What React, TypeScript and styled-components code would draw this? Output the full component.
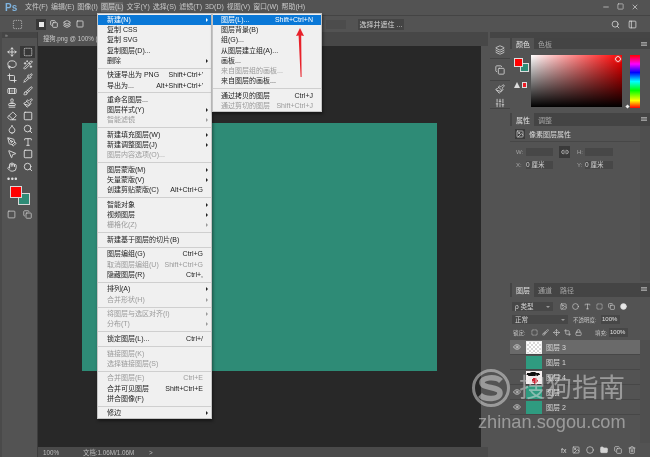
import { createGlobalStyle, styled } from "styled-components";
import {
  Bandage,
  Brush,
  Crop,
  Droplet,
  Eraser,
  FolderClosed,
  Hand,
  Image as ImageIcon,
  Layers,
  Lasso,
  Link2,
  Lock,
  Minus,
  MousePointer2,
  Move,
  PenTool,
  Pipette,
  Search,
  Square,
  SquareDashed,
  Stamp,
  Trash2,
  Type,
  Wand2,
  X,
  Eye,
  Circle,
  PanelLeft,
  Copy,
  Sliders,
  Paintbrush,
} from "lucide-react";

const GlobalStyle = createGlobalStyle`
  html, body { margin: 0; padding: 0; background: #535353; }
  * { box-sizing: border-box; }
`;

const Screen = styled.div`
  position: relative;
  width: 650px;
  height: 457px;
  overflow: hidden;
  display: flex;
  flex-direction: column;
  background: #535353;
  color: #d0d0d0;
  font-family: "Liberation Sans", "Noto Sans CJK SC", sans-serif;
  font-size: 7px;
  filter: blur(0.4px);
`;

const MenuBar = styled.div`
  height: 16px;
  display: flex;
  align-items: center;
  gap: 3px;
  padding-bottom: 1px;
  border-bottom: 1px solid #444;
`;

const Logo = styled.span`
  width: 22px;
  padding-left: 5px;
  color: #7fb3de;
  font-size: 10px;
  font-weight: bold;
`;

const MenuTitle = styled.span<{ $active?: boolean }>`
  height: 10px;
  line-height: 10px;
  white-space: nowrap;
  color: #c8c8c8;
  background: ${(p) => (p.$active ? "#666" : "transparent")};
`;

const WindowButtons = styled.div`
  margin-left: auto;
  padding-right: 11px;
  display: flex;
  gap: 7px;
  color: #ddd;
`;

const OptionsBar = styled.div`
  height: 16px;
  display: flex;
  align-items: center;
  padding-left: 12px;
  color: #ddd;
`;

const ModeGroup = styled.div`
  margin-left: 13px;
  display: flex;
  gap: 3px;
`;

const ModeButton = styled.span<{ $active?: boolean }>`
  width: 10px;
  height: 11px;
  display: flex;
  align-items: center;
  justify-content: center;
  background: ${(p) => (p.$active ? "#383838" : "transparent")};
`;

const ModeDot = styled.span`
  width: 5px;
  height: 5px;
  background: #e8e8e8;
`;

const DimField = styled.span`
  margin-left: 241px;
  width: 20px;
  height: 9px;
  background: #4c4c4c;
`;

const SelectMaskButton = styled.span`
  margin-left: 12px;
  width: 46px;
  height: 11px;
  line-height: 11px;
  text-align: center;
  background: #444;
  color: #d8d8d8;
  white-space: nowrap;
`;

const OptionsRight = styled.div`
  margin-left: auto;
  padding-right: 13px;
  display: flex;
  gap: 8px;
  color: #ddd;
`;

const Workspace = styled.div`
  flex: 1;
  min-height: 0;
  display: flex;
`;

const ToolPanel = styled.div`
  width: 38px;
  border-left: 2px solid #4a4a4a;
  border-right: 1px solid #3d3d3d;
  display: flex;
  flex-direction: column;
  align-items: center;
`;

const CollapseStrip = styled.div`
  align-self: stretch;
  height: 6px;
  background: #454545;
  color: #aaa;
  font-size: 5px;
  line-height: 6px;
  padding-left: 3px;
`;

const ToolGrid = styled.div`
  margin-top: 8px;
  display: grid;
  grid-template-columns: 16px 16px;
  grid-auto-rows: 12.75px;
  justify-items: center;
  align-items: center;
  color: #e4e4e4;
`;

const ToolCell = styled.span<{ $active?: boolean }>`
  width: 15px;
  height: 12px;
  display: flex;
  align-items: center;
  justify-content: center;
  background: ${(p) => (p.$active ? "#383838" : "transparent")};
`;

const MoreDots = styled.div`
  align-self: flex-start;
  margin: 1px 0 0 5px;
  height: 10px;
  line-height: 8px;
  font-size: 9px;
  letter-spacing: 0.5px;
  color: #ddd;
`;

const Swatches = styled.div`
  position: relative;
  align-self: flex-start;
  width: 22px;
  height: 22px;
  margin: 1px 0 0 8px;
`;

const Swatch = styled.span<{ $color: string; $back?: boolean }>`
  position: absolute;
  left: ${(p) => (p.$back ? "8px" : "0")};
  top: ${(p) => (p.$back ? "7px" : "0")};
  width: 12px;
  height: 12px;
  background: ${(p) => p.$color};
  border: 1px solid #d8d8d8;
  z-index: ${(p) => (p.$back ? 0 : 1)};
`;

const QuickRow = styled.div`
  margin-top: 2px;
  display: flex;
  gap: 7px;
  color: #cfcfcf;
`;

const DocColumn = styled.div`
  width: 450px;
  display: flex;
  flex-direction: column;
`;

const TabStrip = styled.div`
  height: 14px;
  display: flex;
  background: #474747;
`;

const DocTab = styled.span`
  width: 70px;
  padding-left: 5px;
  line-height: 14px;
  background: #535353;
  color: #c8c8c8;
  font-size: 6.3px;
  white-space: nowrap;
`;

const DocBody = styled.div`
  flex: 1;
  min-height: 0;
  display: flex;
`;

const Pasteboard = styled.div`
  flex: 1;
  display: flex;
  align-items: center;
  justify-content: center;
  background: #282828;
`;

const Artboard = styled.div`
  width: 355px;
  height: 248px;
  background: #2e8b76;
`;

const ScrollStrip = styled.div`
  width: 7px;
  background: #535353;
`;

const StatusBar = styled.div`
  height: 10px;
  display: flex;
  align-items: center;
  padding-left: 5px;
  background: #4a4a4a;
  color: #bdbdbd;
  font-size: 6.3px;
`;

const StatusDoc = styled.span`
  margin-left: 24px;
  width: 66px;
`;

const Dock = styled.div`
  width: 22px;
  padding-left: 2px;
  display: flex;
  flex-direction: column;
  color: #d5d5d5;
`;

const DockHeader = styled.div`
  height: 6px;
  background: #454545;
  margin-bottom: 3px;
`;

const DockIcon = styled.div<{ $height: number; $divided?: boolean }>`
  height: ${(p) => p.$height}px;
  display: flex;
  align-items: center;
  justify-content: center;
  border-bottom: ${(p) => (p.$divided ? "1px solid #444" : "none")};
`;

const Panels = styled.div`
  width: 140px;
  display: flex;
  flex-direction: column;
`;

const PanelTop = styled.div`
  height: 6px;
  background: #454545;
`;

const TabRow = styled.div<{ $height: number }>`
  height: ${(p) => p.$height}px;
  display: flex;
  align-items: stretch;
  background: #444;
  padding-left: 2px;
  position: relative;
`;

const PanelTab = styled.span<{ $active?: boolean }>`
  padding: 0 4px;
  display: flex;
  align-items: center;
  background: ${(p) => (p.$active ? "#535353" : "transparent")};
  color: ${(p) => (p.$active ? "#e0e0e0" : "#a5a5a5")};
`;

const PanelMenu = styled.span`
  position: absolute;
  right: 3px;
  top: 4px;
  width: 6px;
  height: 4px;
  border-top: 1px solid #999;
  border-bottom: 1px solid #999;
  background: #777;
`;

const ColorBody = styled.div`
  height: 62px;
  margin-bottom: 2px;
  padding: 6px 10px 0 4px;
  display: flex;
`;

const ColorSwatches = styled.div`
  width: 17px;
  display: flex;
  flex-direction: column;
`;

const ColorPair = styled.div`
  position: relative;
  width: 15px;
  height: 15px;
  margin-top: 3px;
`;

const ColorSwatch = styled.span<{ $color: string; $back?: boolean }>`
  position: absolute;
  left: ${(p) => (p.$back ? "6px" : "0")};
  top: ${(p) => (p.$back ? "5px" : "0")};
  width: 9px;
  height: 9px;
  background: ${(p) => p.$color};
  border: 1px solid #ddd;
  z-index: ${(p) => (p.$back ? 0 : 1)};
`;

const GamutRow = styled.div`
  margin-top: 9px;
  display: flex;
  align-items: center;
  gap: 2px;
`;

const GamutMark = styled.span`
  width: 0;
  height: 0;
  border-left: 3px solid transparent;
  border-right: 3px solid transparent;
  border-bottom: 6px solid #ddd;
`;

const GamutColor = styled.span`
  width: 5px;
  height: 6px;
  background: #ee1c25;
  border: 1px solid #ddd;
`;

const ColorField = styled.div`
  position: relative;
  width: 91px;
  height: 52px;
  background: linear-gradient(to top, #000, transparent),
    linear-gradient(to right, #fff, #f00);
`;

const ColorRing = styled.span`
  position: absolute;
  right: 1px;
  top: 1px;
  width: 6px;
  height: 6px;
  border: 1px solid #fff;
  outline: 0.5px solid #d33;
  border-radius: 50%;
`;

const HueStrip = styled.div`
  position: relative;
  margin-left: 8px;
  width: 10px;
  height: 53px;
  background: linear-gradient(to bottom, #f00, #f0f 17%, #00f 33%, #0ff 50%, #0f0 67%, #ff0 86%, #f00);
`;

const HueMark = styled.span`
  position: absolute;
  left: -4px;
  bottom: 0;
  width: 3px;
  height: 3px;
  background: #eee;
  transform: rotate(45deg);
`;

const PropsBody = styled.div`
  height: 155px;
  margin-bottom: 2px;
  border-right: 10px solid #4f4f4f;
`;

const PropsTitle = styled.div`
  height: 16px;
  padding-left: 5px;
  display: flex;
  align-items: center;
  gap: 4px;
  border-bottom: 1px solid #474747;
  color: #d8d8d8;
`;

const PropsThumb = styled.span`
  width: 10px;
  height: 10px;
  display: flex;
  align-items: center;
  justify-content: center;
  background: #3c3c3c;
  color: #ddd;
`;

const FieldGrid = styled.div`
  padding: 3px 0 0 6px;
  display: grid;
  grid-template-columns: 10px 27px 6px 11px 7px 8px 28px;
  grid-auto-rows: 13px;
  align-items: center;
  color: #a5a5a5;
  font-size: 6px;
`;

const FieldInput = styled.span`
  height: 8px;
  line-height: 8px;
  background: #474747;
  color: #d0d0d0;
  font-size: 6.5px;
  white-space: nowrap;
`;

const LinkButton = styled.span`
  width: 11px;
  height: 12px;
  display: flex;
  align-items: center;
  justify-content: center;
  background: #3a3a3a;
  color: #ddd;
`;

const LayerControls = styled.div`
  height: 13px;
  padding-left: 2px;
  display: flex;
  align-items: center;
  color: #c4c4c4;
  font-size: 6.5px;
  white-space: nowrap;
`;

const ControlsTop = styled.div`
  height: 3px;
`;

const SelectBox = styled.span<{ $width: number }>`
  width: ${(p) => p.$width}px;
  height: 9px;
  line-height: 9px;
  padding-left: 3px;
  background: #474747;
  color: #d4d4d4;
  position: relative;
  &::after {
    content: "";
    position: absolute;
    right: 3px;
    top: 4px;
    border-left: 2px solid transparent;
    border-right: 2px solid transparent;
    border-top: 2px solid #999;
  }
`;

const FilterIcons = styled.div`
  margin-left: 7px;
  display: flex;
  gap: 5px;
  color: #d8d8d8;
`;

const ControlLabel = styled.span<{ $left: number; $width: number }>`
  margin-left: ${(p) => p.$left}px;
  width: ${(p) => p.$width}px;
  font-size: 5.5px;
`;

const PercentBox = styled.span`
  width: 19px;
  height: 9px;
  line-height: 9px;
  padding-left: 1px;
  background: #474747;
  color: #e0e0e0;
  font-size: 6px;
`;

const LockIcons = styled.div`
  width: 64px;
  margin-left: 5px;
  display: flex;
  gap: 4px;
  color: #d8d8d8;
`;

const LayerList = styled.div`
  flex: 1;
  min-height: 0;
  margin-top: 1px;
  border-right: 10px solid #4f4f4f;
`;

const LayerRow = styled.div<{ $selected?: boolean }>`
  height: 15px;
  display: flex;
  align-items: center;
  background: ${(p) => (p.$selected ? "#6a6a6a" : "transparent")};
  border-bottom: 1px solid #474747;
  color: #d8d8d8;
`;

const EyeSlot = styled.span`
  width: 16px;
  padding-left: 3px;
  display: flex;
  color: #e0e0e0;
`;

const LayerThumb = styled.span<{ $kind: "check" | "teal" | "photo" }>`
  width: 16px;
  height: 13px;
  margin-right: 4px;
  background: ${(p) =>
    p.$kind === "teal"
      ? "#2f9b80"
      : p.$kind === "photo"
        ? "radial-gradient(ellipse 7px 2px at 45% 25%, #111 90%, transparent), radial-gradient(circle 3px at 55% 75%, #c23 90%, transparent), #f6f0f0"
        : "repeating-conic-gradient(#d8d8d8 0 25%, #fff 0 50%) 0 0 / 4px 4px"};
  border: ${(p) => (p.$kind === "check" ? "1px solid #eee" : "none")};
`;

const LayerFooter = styled.div`
  height: 14px;
  padding: 0 14px 0 51px;
  display: flex;
  align-items: center;
  justify-content: space-between;
  color: #d4d4d4;
`;

const LayerMenu = styled.div`
  position: absolute;
  left: 97px;
  top: 13px;
  width: 115px;
  padding-top: 1px;
  background: #f0f0f0;
  border: 1px solid #c4c4c4;
  box-shadow: 1px 2px 3px rgba(0, 0, 0, 0.45);
  color: #222;
  z-index: 2;
`;

const SubMenu = styled(LayerMenu)`
  left: 212px;
  top: 13px;
  width: 110px;
  z-index: 3;
`;

const MenuRow = styled.div<{ $hot?: boolean; $off?: boolean; $indent: number }>`
  height: 10.2px;
  line-height: 10.2px;
  display: flex;
  padding-left: ${(p) => p.$indent}px;
  white-space: nowrap;
  background: ${(p) => (p.$hot ? "#0a78d7" : "transparent")};
  color: ${(p) => (p.$hot ? "#fff" : p.$off ? "#9a9a9a" : "#222")};
`;

const MenuLabel = styled.span`
  flex: 1;
`;

const MenuArrow = styled.span<{ $shown: boolean }>`
  width: 8px;
  flex: none;
  position: relative;
  &::after {
    content: "";
    display: ${(p) => (p.$shown ? "block" : "none")};
    position: absolute;
    left: 3px;
    top: 3px;
    border-top: 2px solid transparent;
    border-bottom: 2px solid transparent;
    border-left: 2.5px solid currentColor;
  }
`;

const MenuSeparator = styled.div`
  height: 4.4px;
  display: flex;
  align-items: center;
  &::after {
    content: "";
    width: 100%;
    height: 1px;
    background: #cfcfcf;
  }
`;

const RedArrow = styled.svg`
  position: absolute;
  left: 295px;
  top: 27px;
  z-index: 4;
`;

const Watermark = styled.div`
  position: absolute;
  left: 470px;
  top: 369px;
  width: 170px;
  color: rgba(225, 225, 225, 0.5);
  z-index: 1;
`;

const WatermarkTop = styled.div`
  display: flex;
  align-items: center;
  gap: 7px;
`;

const WatermarkName = styled.span`
  font-size: 26.5px;
  line-height: 38px;
  white-space: nowrap;
`;

const WatermarkUrl = styled.div`
  margin: 5px 0 0 8px;
  font-size: 18.2px;
  line-height: 20px;
  white-space: nowrap;
`;

type Entry = { label?: string; keys?: string; arrow?: boolean; off?: boolean; hot?: boolean };

const mainMenu: Entry[] = [
  { label: "新建(N)", arrow: true, hot: true },
  { label: "复制 CSS" },
  { label: "复制 SVG" },
  { label: "复制图层(D)..." },
  { label: "删除", arrow: true },
  {},
  { label: "快速导出为 PNG", keys: "Shift+Ctrl+'" },
  { label: "导出为...", keys: "Alt+Shift+Ctrl+'" },
  {},
  { label: "重命名图层..." },
  { label: "图层样式(Y)", arrow: true },
  { label: "智能滤镜", arrow: true, off: true },
  {},
  { label: "新建填充图层(W)", arrow: true },
  { label: "新建调整图层(J)", arrow: true },
  { label: "图层内容选项(O)...", off: true },
  {},
  { label: "图层蒙版(M)", arrow: true },
  { label: "矢量蒙版(V)", arrow: true },
  { label: "创建剪贴蒙版(C)", keys: "Alt+Ctrl+G" },
  {},
  { label: "智能对象", arrow: true },
  { label: "视频图层", arrow: true },
  { label: "栅格化(Z)", arrow: true, off: true },
  {},
  { label: "新建基于图层的切片(B)" },
  {},
  { label: "图层编组(G)", keys: "Ctrl+G" },
  { label: "取消图层编组(U)", keys: "Shift+Ctrl+G", off: true },
  { label: "隐藏图层(R)", keys: "Ctrl+," },
  {},
  { label: "排列(A)", arrow: true },
  { label: "合并形状(H)", arrow: true, off: true },
  {},
  { label: "将图层与选区对齐(I)", arrow: true, off: true },
  { label: "分布(T)", arrow: true, off: true },
  {},
  { label: "锁定图层(L)...", keys: "Ctrl+/" },
  {},
  { label: "链接图层(K)", off: true },
  { label: "选择链接图层(S)", off: true },
  {},
  { label: "合并图层(E)", keys: "Ctrl+E", off: true },
  { label: "合并可见图层", keys: "Shift+Ctrl+E" },
  { label: "拼合图像(F)" },
  {},
  { label: "修边", arrow: true },
];

const newMenu: Entry[] = [
  { label: "图层(L)...", keys: "Shift+Ctrl+N", hot: true },
  { label: "图层背景(B)" },
  { label: "组(G)..." },
  { label: "从图层建立组(A)..." },
  { label: "画板..." },
  { label: "来自图层组的画板...", off: true },
  { label: "来自图层的画板..." },
  {},
  { label: "通过拷贝的图层", keys: "Ctrl+J" },
  { label: "通过剪切的图层", keys: "Shift+Ctrl+J", off: true },
];

const menuTitles = ["文件(F)", "编辑(E)", "图像(I)", "图层(L)", "文字(Y)", "选择(S)", "滤镜(T)", "3D(D)", "视图(V)", "窗口(W)", "帮助(H)"];

const tools = [Move, SquareDashed, Lasso, Wand2, Crop, Pipette, Bandage, Brush, Stamp, Paintbrush, Eraser, Square, Droplet, Search, PenTool, Type, MousePointer2, Square, Hand, Search];

function MenuItems({ items, indent }: { items: Entry[]; indent: number }) {
  return (
    <>
      {items.map((item, i) =>
        item.label ? (
          <MenuRow key={i} $hot={item.hot} $off={item.off} $indent={indent}>
            <MenuLabel>{item.label}</MenuLabel>
            {item.keys && <span>{item.keys}</span>}
            <MenuArrow $shown={!!item.arrow} />
          </MenuRow>
        ) : (
          <MenuSeparator key={i} />
        ),
      )}
    </>
  );
}

function SogouMark() {
  return (
    <svg width="42" height="38" viewBox="0 0 42 38" fill="none" stroke="currentColor">
      <circle cx="21" cy="19" r="17.5" strokeWidth="3" />
      <path d="M31 12 C26 7 11 8 12 14 C13 20 30 17 30 24 C30 31 15 31 10 26" strokeWidth="5.5" />
    </svg>
  );
}

export default function App() {
  return (
    <>
      <GlobalStyle />
      <Screen>
        <MenuBar>
          <Logo>Ps</Logo>
          {menuTitles.map((title) => (
            <MenuTitle key={title} $active={title === "图层(L)"}>
              {title}
            </MenuTitle>
          ))}
          <WindowButtons>
            <Minus size={8} />
            <Square size={7} />
            <X size={8} />
          </WindowButtons>
        </MenuBar>

        <OptionsBar>
          <SquareDashed size={11} strokeWidth={1.4} />
          <ModeGroup>
            <ModeButton $active>
              <ModeDot />
            </ModeButton>
            <ModeButton>
              <Copy size={8} strokeWidth={2.4} />
            </ModeButton>
            <ModeButton>
              <Layers size={8} strokeWidth={2.4} />
            </ModeButton>
            <ModeButton>
              <Square size={8} strokeWidth={2.4} />
            </ModeButton>
          </ModeGroup>
          <DimField />
          <SelectMaskButton>选择并遮住 ...</SelectMaskButton>
          <OptionsRight>
            <Search size={9} />
            <PanelLeft size={9} />
          </OptionsRight>
        </OptionsBar>

        <Workspace>
          <ToolPanel>
            <CollapseStrip>»</CollapseStrip>
            <ToolGrid>
              {tools.map((Tool, i) => (
                <ToolCell key={i} $active={i === 1}>
                  <Tool size={10} strokeWidth={2.1} />
                </ToolCell>
              ))}
            </ToolGrid>
            <MoreDots>•••</MoreDots>
            <Swatches>
              <Swatch $color="#ff0000" />
              <Swatch $color="#2e8b76" $back />
            </Swatches>
            <QuickRow>
              <Square size={9} />
              <Copy size={9} />
            </QuickRow>
          </ToolPanel>

          <DocColumn>
            <TabStrip>
              <DocTab>搜狗.png @ 100% (</DocTab>
            </TabStrip>
            <DocBody>
              <Pasteboard>
                <Artboard />
              </Pasteboard>
              <ScrollStrip />
            </DocBody>
            <StatusBar>
              <span>100%</span>
              <StatusDoc>文档:1.06M/1.06M</StatusDoc>
              <span>&gt;</span>
            </StatusBar>
          </DocColumn>

          <Dock>
            <DockHeader />
            <DockIcon $height={18} $divided>
              <Layers size={10} />
            </DockIcon>
            <DockIcon $height={22} $divided>
              <Copy size={10} />
            </DockIcon>
            <DockIcon $height={16}>
              <Paintbrush size={10} />
            </DockIcon>
            <DockIcon $height={12} $divided>
              <Sliders size={10} />
            </DockIcon>
          </Dock>

          <Panels>
            <PanelTop />
            <TabRow $height={11}>
              <PanelTab $active>颜色</PanelTab>
              <PanelTab>色板</PanelTab>
              <PanelMenu />
            </TabRow>
            <ColorBody>
              <ColorSwatches>
                <ColorPair>
                  <ColorSwatch $color="#ff0000" />
                  <ColorSwatch $color="#2e8b76" $back />
                </ColorPair>
                <GamutRow>
                  <GamutMark />
                  <GamutColor />
                </GamutRow>
              </ColorSwatches>
              <ColorField>
                <ColorRing />
              </ColorField>
              <HueStrip>
                <HueMark />
              </HueStrip>
            </ColorBody>

            <TabRow $height={13}>
              <PanelTab $active>属性</PanelTab>
              <PanelTab>调整</PanelTab>
              <PanelMenu />
            </TabRow>
            <PropsBody>
              <PropsTitle>
                <PropsThumb>
                  <ImageIcon size={8} />
                </PropsThumb>
                像素图层属性
              </PropsTitle>
              <FieldGrid>
                <span>W:</span>
                <FieldInput />
                <span />
                <LinkButton>
                  <Link2 size={8} />
                </LinkButton>
                <span />
                <span>H:</span>
                <FieldInput />
                <span>X:</span>
                <FieldInput>0 厘米</FieldInput>
                <span />
                <span />
                <span />
                <span>Y:</span>
                <FieldInput>0 厘米</FieldInput>
              </FieldGrid>
            </PropsBody>

            <TabRow $height={14}>
              <PanelTab $active>图层</PanelTab>
              <PanelTab>通道</PanelTab>
              <PanelTab>路径</PanelTab>
              <PanelMenu />
            </TabRow>
            <ControlsTop />
            <LayerControls>
              <SelectBox $width={41}>ρ 类型</SelectBox>
              <FilterIcons>
                <ImageIcon size={7} />
                <Circle size={7} />
                <Type size={7} />
                <SquareDashed size={7} />
                <Copy size={7} />
                <Circle size={7} fill="#e8e8e8" />
              </FilterIcons>
            </LayerControls>
            <LayerControls>
              <SelectBox $width={56}>正常</SelectBox>
              <ControlLabel $left={5} $width={28}>
                不透明度:
              </ControlLabel>
              <PercentBox>100%</PercentBox>
            </LayerControls>
            <LayerControls>
              <ControlLabel $left={1} $width={13}>
                锁定:
              </ControlLabel>
              <LockIcons>
                <SquareDashed size={7} />
                <Brush size={7} />
                <Move size={7} />
                <Crop size={7} />
                <Lock size={7} />
              </LockIcons>
              <ControlLabel $left={0} $width={14}>
                填充:
              </ControlLabel>
              <PercentBox>100%</PercentBox>
            </LayerControls>
            <LayerList>
              <LayerRow $selected>
                <EyeSlot>
                  <Eye size={8} />
                </EyeSlot>
                <LayerThumb $kind="check" />
                图层 3
              </LayerRow>
              <LayerRow>
                <EyeSlot />
                <LayerThumb $kind="teal" />
                图层 1
              </LayerRow>
              <LayerRow>
                <EyeSlot />
                <LayerThumb $kind="photo" />
                图层 4
              </LayerRow>
              <LayerRow>
                <EyeSlot>
                  <Eye size={8} />
                </EyeSlot>
                <LayerThumb $kind="teal" />
                图层
              </LayerRow>
              <LayerRow>
                <EyeSlot>
                  <Eye size={8} />
                </EyeSlot>
                <LayerThumb $kind="teal" />
                图层 2
              </LayerRow>
            </LayerList>
            <LayerFooter>
              <span>fx</span>
              <ImageIcon size={8} />
              <Circle size={8} />
              <FolderClosed size={8} fill="#d4d4d4" />
              <Copy size={8} />
              <Trash2 size={8} />
            </LayerFooter>
          </Panels>
        </Workspace>

        <LayerMenu>
          <MenuItems items={mainMenu} indent={9} />
        </LayerMenu>
        <SubMenu>
          <MenuItems items={newMenu} indent={8} />
        </SubMenu>

        <RedArrow width="10" height="52" viewBox="0 0 10 52">
          <path d="M5 1 L9 9 L6.2 8.5 L6.6 50 L5.6 50 L3.6 8.5 L1 9 Z" fill="#e8212a" />
        </RedArrow>

        <Watermark>
          <WatermarkTop>
            <SogouMark />
            <WatermarkName>搜狗指南</WatermarkName>
          </WatermarkTop>
          <WatermarkUrl>zhinan.sogou.com</WatermarkUrl>
        </Watermark>
      </Screen>
    </>
  );
}
